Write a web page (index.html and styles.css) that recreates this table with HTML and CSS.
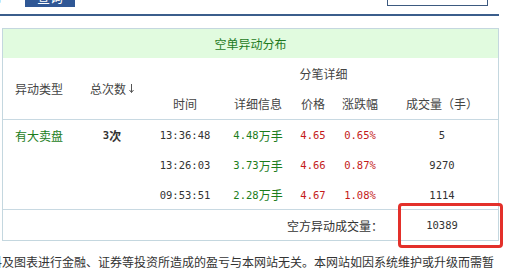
FILE: index.html
```html
<!DOCTYPE html>
<html lang="zh-CN">
<head>
<meta charset="utf-8">
<title>空单异动分布</title>
<link rel="stylesheet" href="styles.css">
</head>
<body>
<div class="toolbar">
  <span class="date-tail">日</span>
  <span class="btn">查询</span>
  <span class="search-box"></span>
</div>

<div class="panel">
  <div class="title">空单异动分布</div>
  <div class="grid thead">
    <div class="cell span2">异动类型</div>
    <div class="cell span2">总次数<svg class="arrow" width="5" height="9" viewBox="0 0 5 9"><path d="M2.5 0V8.5M0.5 6L2.5 8.5L4.5 6" fill="none" stroke="#555" stroke-width="1"/></svg></div>
    <div class="cell wide">分笔详细</div>
    <div class="cell">时间</div>
    <div class="cell">详细信息</div>
    <div class="cell">价格</div>
    <div class="cell">涨跌幅</div>
    <div class="cell last">成交量（手）</div>
  </div>
  <div class="grid tbody">
    <div class="cell green">有大卖盘</div>
    <div class="cell bold"><span class="n">3</span>次</div>
    <div class="cell"><span class="n">13:36:48</span></div>
    <div class="cell green"><span class="n">4.48</span>万手</div>
    <div class="cell red"><span class="n">4.65</span></div>
    <div class="cell red"><span class="n">0.65%</span></div>
    <div class="cell last"><span class="n">5</span></div>

    <div class="cell"></div>
    <div class="cell"></div>
    <div class="cell"><span class="n">13:26:03</span></div>
    <div class="cell green"><span class="n">3.73</span>万手</div>
    <div class="cell red"><span class="n">4.66</span></div>
    <div class="cell red"><span class="n">0.87%</span></div>
    <div class="cell last"><span class="n">9270</span></div>

    <div class="cell"></div>
    <div class="cell"></div>
    <div class="cell"><span class="n">09:53:51</span></div>
    <div class="cell green"><span class="n">2.28</span>万手</div>
    <div class="cell red"><span class="n">4.67</span></div>
    <div class="cell red"><span class="n">1.08%</span></div>
    <div class="cell last"><span class="n">1114</span></div>
  </div>
  <div class="grid tfoot">
    <div class="cell total-label">空方异动成交量：</div>
    <div class="cell last"><span class="n">10389</span></div>
  </div>
</div>

<p class="disclaimer">料及图表进行金融、证券等投资所造成的盈亏与本网站无关。本网站如因系统维护或升级而需暂</p>

<div class="highlight"></div>
</body>
</html>
```
FILE: styles.css
```css
html, body {
  margin: 0;
  padding: 0;
  background: #ffffff;
}
body {
  width: 513px;
  height: 272px;
  overflow: hidden;
  font-family: "Noto Sans CJK SC", "Liberation Sans", sans-serif;
  font-size: 12px;
  color: #333333;
}

/* top toolbar, mostly scrolled out of view */
.toolbar {
  width: 499px;
  height: 30px;
  margin-top: -16px;
  border-bottom: 2px solid #3b5e8c;
  display: flex;
  align-items: flex-start;
}
.date-tail {
  margin-left: -10px;
  margin-top: 7px;
  width: 12px;
  line-height: 12px;
  color: #333;
}
.btn {
  margin-left: 23px;
  margin-top: 1px;
  width: 50px;
  height: 22px;
  line-height: 24px;
  background: #2f5795;
  color: #ffffff;
  text-align: center;
  font-size: 13px;
}
.search-box {
  margin-left: 312px;
  width: 101px;
  height: 22px;
  box-sizing: border-box;
  border: 1px solid #3d5a80;
  background: #fff;
}

/* panel */
.panel {
  margin-top: 12px;
  margin-left: 2px;
  width: 497px;
  box-sizing: border-box;
  border: 1px solid #c4d7df;
}
.title {
  height: 29px;
  background: #e1fbdf;
  color: #1e7a1e;
  display: flex;
  align-items: center;
  justify-content: center;
  font-size: 12px;
}
.grid {
  display: grid;
  grid-template-columns: 72px 74px 72px 74px 36px 58px 1fr;
}
.thead {
  grid-template-rows: 30px 31px;
  border-bottom: 1px solid #c8d9e2;
  color: #444444;
}
.tbody {
  grid-template-rows: 30px 30px 29px;
  border-bottom: 1px solid #c8d9e2;
}
.tfoot {
  grid-template-rows: 30px;
}
.cell {
  display: flex;
  align-items: center;
  justify-content: center;
  white-space: nowrap;
}
.cell.last {
  padding-right: 3px;
}
.span2 {
  grid-row: span 2;
}
.wide {
  grid-column: 3 / span 5;
}
.arrow {
  margin-left: 3px;
}
.n {
  font-family: "DejaVu Sans Mono", "Liberation Mono", monospace;
  font-size: 10.5px;
}
.green {
  color: #1c7d1c;
}
.red {
  color: #c41a1a;
}
.bold {
  font-weight: bold;
}
.bold .n {
  font-weight: bold;
}
.total-label {
  grid-column: 1 / span 6;
  justify-content: flex-end;
  padding-right: 6px;
  color: #333;
}

.disclaimer {
  margin: 11px 0 0 -10px;
  width: 505px;
  line-height: 20px;
  color: #333;
}

/* red annotation box over the total */
.highlight {
  position: absolute;
  left: 398px;
  top: 203px;
  width: 105px;
  height: 45px;
  box-sizing: border-box;
  border: 3px solid #e3302a;
  border-radius: 4px;
}
```
